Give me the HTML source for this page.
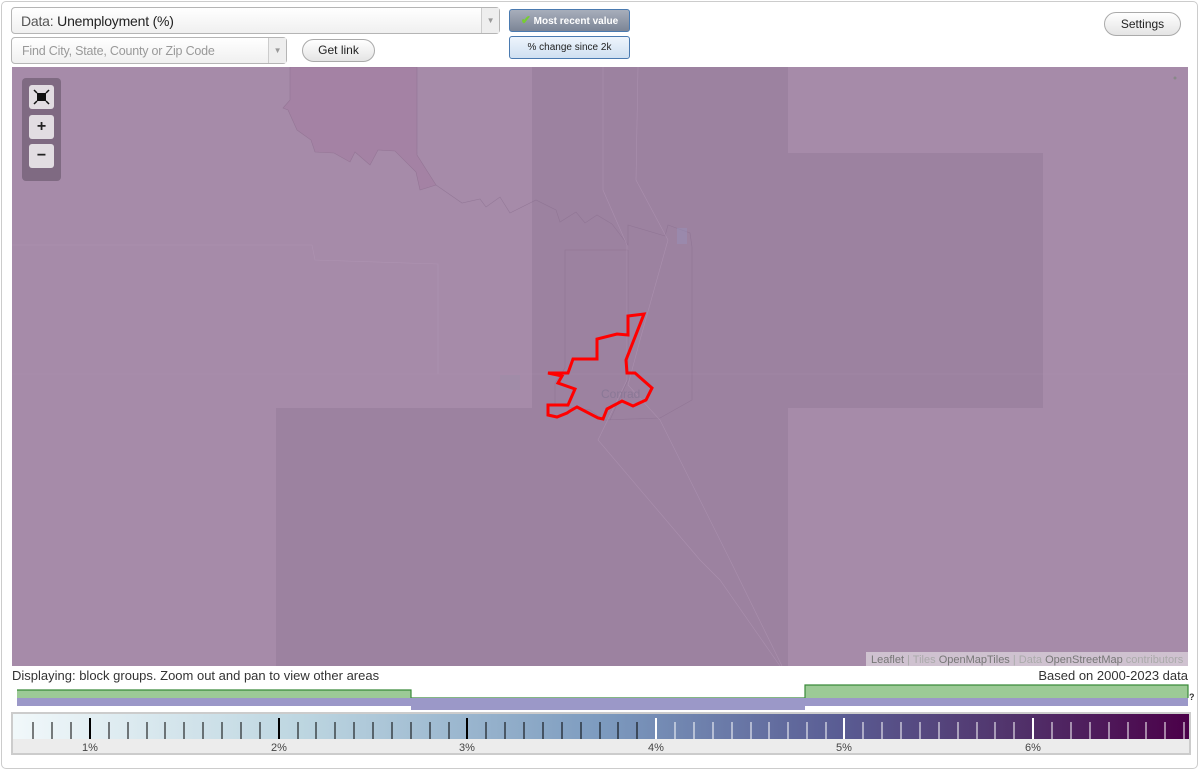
<!DOCTYPE html>
<html><head><meta charset="utf-8"><style>
*{box-sizing:border-box}
body{margin:0;width:1200px;height:771px;background:#fff;font-family:"Liberation Sans",sans-serif;position:relative;overflow:hidden}
.frame{position:absolute;left:1px;top:1px;width:1197px;height:768px;border:1px solid #ccc;border-radius:5px}
.sel{position:absolute;border:1px solid #b5b5b5;border-radius:4px;background:linear-gradient(#fff,#f0f0f0);color:#555}
.arrow{position:absolute;right:0;top:0;bottom:0;width:18px;border-left:1px solid #ccc;background:#eee;color:#999;font-size:8px;text-align:center}
.btn{position:absolute;border:1px solid #aaa;border-radius:12px;background:linear-gradient(#fff,#e4e4e4);font-size:12px;color:#222;text-align:center}
.tgl{position:absolute;border:1px solid #4a7ab0;border-radius:3px;font-size:10px;text-align:center}
.zb{position:absolute;left:29px;width:25px;height:24px;background:#e2dde2;border-radius:3px;text-align:center;font-weight:bold;color:#222}
</style></head><body>
<div class="frame"></div>
<div class="sel" style="left:11px;top:7px;width:489px;height:27px;padding:5px 9px;font-size:14px;letter-spacing:-0.2px">Data: <span style="color:#222">Unemployment (%)</span><div class="arrow" style="line-height:26px">▼</div></div>
<div class="sel" style="left:11px;top:37px;width:276px;height:27px;padding:6px 10px;font-size:12.5px;color:#999;letter-spacing:-0.2px">Find City, State, County or Zip Code<div class="arrow" style="line-height:26px">▼</div></div>
<div class="btn" style="left:302px;top:39px;width:73px;height:23px;line-height:21px">Get link</div>
<div class="tgl" style="left:509px;top:9px;width:121px;height:23px;background:linear-gradient(#a7aebb,#7c8596);color:#fff;font-weight:bold;line-height:21px"><span style="color:#7c3;font-size:12px">✔</span> Most recent value</div>
<div class="tgl" style="left:509px;top:36px;width:121px;height:23px;background:linear-gradient(#eef5fc,#cfe0f1);color:#222;line-height:21px">% change since 2k</div>
<div class="btn" style="left:1104px;top:12px;width:77px;height:24px;line-height:22px">Settings</div>

<svg style="position:absolute;left:12px;top:67px" width="1176" height="599" viewBox="12 67 1176 599">
<rect x="12" y="67" width="1176" height="599" fill="#a68ba9"/>
<rect x="532" y="67" width="256" height="599" fill="#9c82a0"/>
<rect x="788" y="153" width="255" height="255" fill="#9c82a0"/>
<rect x="276" y="408" width="256" height="258" fill="#9c82a0"/>
<polygon points="290,67 417,67 417,155 436,185 420,190 416,172 395,151 378,150 370,165 355,152 350,162 334,153 315,152 311,140 297,130 288,110 283,108 290,100" fill="#a482a4" stroke="#8d6f8f" stroke-width="0.6" stroke-opacity="0.7"/>
<g fill="none" stroke="#8b7190" stroke-width="0.6" stroke-opacity="0.7">
<polyline points="436,185 462,203 480,199 486,207 500,197 510,213 536,200 556,210 560,222 576,212 585,223 597,215 612,224"/>
<polyline points="612,224 628,245 628,225 665,236 668,225 690,233 692,247 692,400 660,418 604,420 590,410 555,405 555,383 565,368 565,250 628,250"/>
<polyline points="628,250 628,380 610,420"/>
</g>
<g fill="none" stroke="#b49ab8" stroke-width="0.6" stroke-opacity="0.6">
<polyline points="603,67 603,190 627,245 627,380 598,440 700,560 720,580 780,666"/>
<polyline points="638,67 636,180 668,240 640,340 628,385 660,420 730,560 782,666"/>
<polyline points="12,245 312,245 315,260 438,264 438,374"/>
<polyline points="12,374 1188,374" stroke-opacity="0.3"/>
</g>
<rect x="677" y="228" width="10" height="16" fill="#9890b8" opacity="0.5"/>
<rect x="500" y="375" width="20" height="15" fill="#9a8ea8" opacity="0.4"/>
<text x="601" y="398" font-family="Liberation Sans" font-size="12" fill="#8a7896">Conrad</text>
<polygon points="628,316 644,314 626,360 627,373 635,373 652,388 646,400 633,406 622,401 607,409 603,419 598,418 577,407 570,411 567,413 557,417 548,415 548,405 568,405 575,389 558,383 562,376 548,373 568,373 573,359 597,359 597,339 617,334 628,335" fill="none" stroke="#f00" stroke-width="3"/>
<rect x="866" y="652" width="322" height="14" fill="#d9cfda" opacity="0.8"/>
<text x="871" y="663" font-family="Liberation Sans" font-size="11" fill="#aaa"><tspan fill="#777">Leaflet</tspan> | Tiles <tspan fill="#777">OpenMapTiles</tspan> | Data <tspan fill="#777">OpenStreetMap</tspan> contributors</text>
<circle cx="1175" cy="78" r="1.5" fill="#888"/>
</svg>
<div style="position:absolute;left:22px;top:78px;width:39px;height:103px;background:#7f6a82;border-radius:4px"></div>
<div class="zb" style="top:85px"><svg width="25" height="24"><rect x="8" y="8" width="9" height="8" fill="#111"/><g stroke="#111" stroke-width="1.5"><line x1="5" y1="5" x2="8" y2="8"/><line x1="20" y1="5" x2="17" y2="8"/><line x1="5" y1="19" x2="8" y2="16"/><line x1="20" y1="19" x2="17" y2="16"/></g></svg></div>
<div class="zb" style="top:115px;font-size:16px;line-height:23px">+</div>
<div class="zb" style="top:144px;font-size:16px;line-height:23px">−</div>

<div style="position:absolute;left:12px;top:668px;font-size:13px;color:#333">Displaying: block groups. Zoom out and pan to view other areas</div>
<div style="position:absolute;right:12px;top:668px;font-size:13px;color:#333">Based on 2000-2023 data</div>
<svg style="position:absolute;left:0;top:680px" width="1200" height="32">
<rect x="17" y="10" width="394" height="8" fill="#9cca96"/>
<rect x="805" y="5" width="383" height="13" fill="#9cca96"/>
<polyline points="17,10 411,10 411,18 805,18 805,5 1188,5 1188,18" fill="none" stroke="#3a8a3a" stroke-width="1.2"/>
<rect x="17" y="18" width="394" height="8" fill="#9b98c8"/>
<rect x="411" y="18" width="394" height="12" fill="#9b98c8"/>
<rect x="805" y="18" width="383" height="8" fill="#9b98c8"/>
<text x="1189" y="20" font-size="9" font-weight="bold" fill="#333">?</text>
</svg>
<div style="position:absolute;left:11px;top:712px;width:1180px;height:43px;border:2px solid #ccc;background:#ececec"></div>
<svg style="position:absolute;left:13px;top:714px" width="1176" height="40">
<defs><linearGradient id="g" x1="0" x2="1"><stop offset="0" stop-color="#f1f8fa"/><stop offset="0.25" stop-color="#bcd5e0"/><stop offset="0.5" stop-color="#7d9bbf"/><stop offset="0.7" stop-color="#5a5d94"/><stop offset="0.85" stop-color="#51336b"/><stop offset="1" stop-color="#4b0049"/></linearGradient></defs>
<rect x="0" y="0" width="1176" height="25" fill="url(#g)"/>
<g font-size="11" fill="#444" text-anchor="middle" font-family="Liberation Sans">
<text x="77" y="37">1%</text><text x="266" y="37">2%</text><text x="454" y="37">3%</text><text x="643" y="37">4%</text><text x="831" y="37">5%</text><text x="1020" y="37">6%</text></g>
<g stroke-width="1">
<line x1="20" x2="20" y1="8" y2="25" stroke="#000"/><line x1="39" x2="39" y1="8" y2="25" stroke="#000"/><line x1="58" x2="58" y1="8" y2="25" stroke="#000"/><line x1="77" x2="77" y1="4" y2="25" stroke="#000" stroke-width="2"/>
<line x1="96" x2="96" y1="8" y2="25" stroke="#000"/><line x1="115" x2="115" y1="8" y2="25" stroke="#000"/><line x1="134" x2="134" y1="8" y2="25" stroke="#000"/><line x1="152" x2="152" y1="8" y2="25" stroke="#000"/><line x1="171" x2="171" y1="8" y2="25" stroke="#000"/><line x1="190" x2="190" y1="8" y2="25" stroke="#000"/><line x1="209" x2="209" y1="8" y2="25" stroke="#000"/><line x1="228" x2="228" y1="8" y2="25" stroke="#000"/><line x1="247" x2="247" y1="8" y2="25" stroke="#000"/><line x1="266" x2="266" y1="4" y2="25" stroke="#000" stroke-width="2"/>
<line x1="285" x2="285" y1="8" y2="25" stroke="#000"/><line x1="303" x2="303" y1="8" y2="25" stroke="#000"/><line x1="322" x2="322" y1="8" y2="25" stroke="#000"/><line x1="341" x2="341" y1="8" y2="25" stroke="#000"/><line x1="360" x2="360" y1="8" y2="25" stroke="#000"/><line x1="379" x2="379" y1="8" y2="25" stroke="#000"/><line x1="398" x2="398" y1="8" y2="25" stroke="#000"/><line x1="417" x2="417" y1="8" y2="25" stroke="#000"/><line x1="436" x2="436" y1="8" y2="25" stroke="#000"/><line x1="454" x2="454" y1="4" y2="25" stroke="#000" stroke-width="2"/>
<line x1="473" x2="473" y1="8" y2="25" stroke="#000"/><line x1="492" x2="492" y1="8" y2="25" stroke="#000"/><line x1="511" x2="511" y1="8" y2="25" stroke="#000"/><line x1="530" x2="530" y1="8" y2="25" stroke="#000"/><line x1="549" x2="549" y1="8" y2="25" stroke="#000"/><line x1="568" x2="568" y1="8" y2="25" stroke="#000"/><line x1="587" x2="587" y1="8" y2="25" stroke="#000"/><line x1="605" x2="605" y1="8" y2="25" stroke="#000"/><line x1="624" x2="624" y1="8" y2="25" stroke="#000"/><line x1="643" x2="643" y1="4" y2="25" stroke="#fff" stroke-width="2"/>
</g>
<g stroke="#fff">
<line x1="662" x2="662" y1="8" y2="25"/><line x1="681" x2="681" y1="8" y2="25"/><line x1="700" x2="700" y1="8" y2="25"/><line x1="719" x2="719" y1="8" y2="25"/><line x1="738" x2="738" y1="8" y2="25"/><line x1="756" x2="756" y1="8" y2="25"/><line x1="775" x2="775" y1="8" y2="25"/><line x1="794" x2="794" y1="8" y2="25"/><line x1="813" x2="813" y1="8" y2="25"/><line x1="831" x2="831" y1="4" y2="25" stroke-width="2"/>
<line x1="850" x2="850" y1="8" y2="25"/><line x1="869" x2="869" y1="8" y2="25"/><line x1="888" x2="888" y1="8" y2="25"/><line x1="907" x2="907" y1="8" y2="25"/><line x1="926" x2="926" y1="8" y2="25"/><line x1="945" x2="945" y1="8" y2="25"/><line x1="964" x2="964" y1="8" y2="25"/><line x1="982" x2="982" y1="8" y2="25"/><line x1="1001" x2="1001" y1="8" y2="25"/><line x1="1020" x2="1020" y1="4" y2="25" stroke-width="2"/>
<line x1="1039" x2="1039" y1="8" y2="25"/><line x1="1058" x2="1058" y1="8" y2="25"/><line x1="1077" x2="1077" y1="8" y2="25"/><line x1="1096" x2="1096" y1="8" y2="25"/><line x1="1115" x2="1115" y1="8" y2="25"/><line x1="1133" x2="1133" y1="8" y2="25"/><line x1="1152" x2="1152" y1="8" y2="25"/><line x1="1171" x2="1171" y1="8" y2="25"/>
</g>
</svg>
</body></html>
